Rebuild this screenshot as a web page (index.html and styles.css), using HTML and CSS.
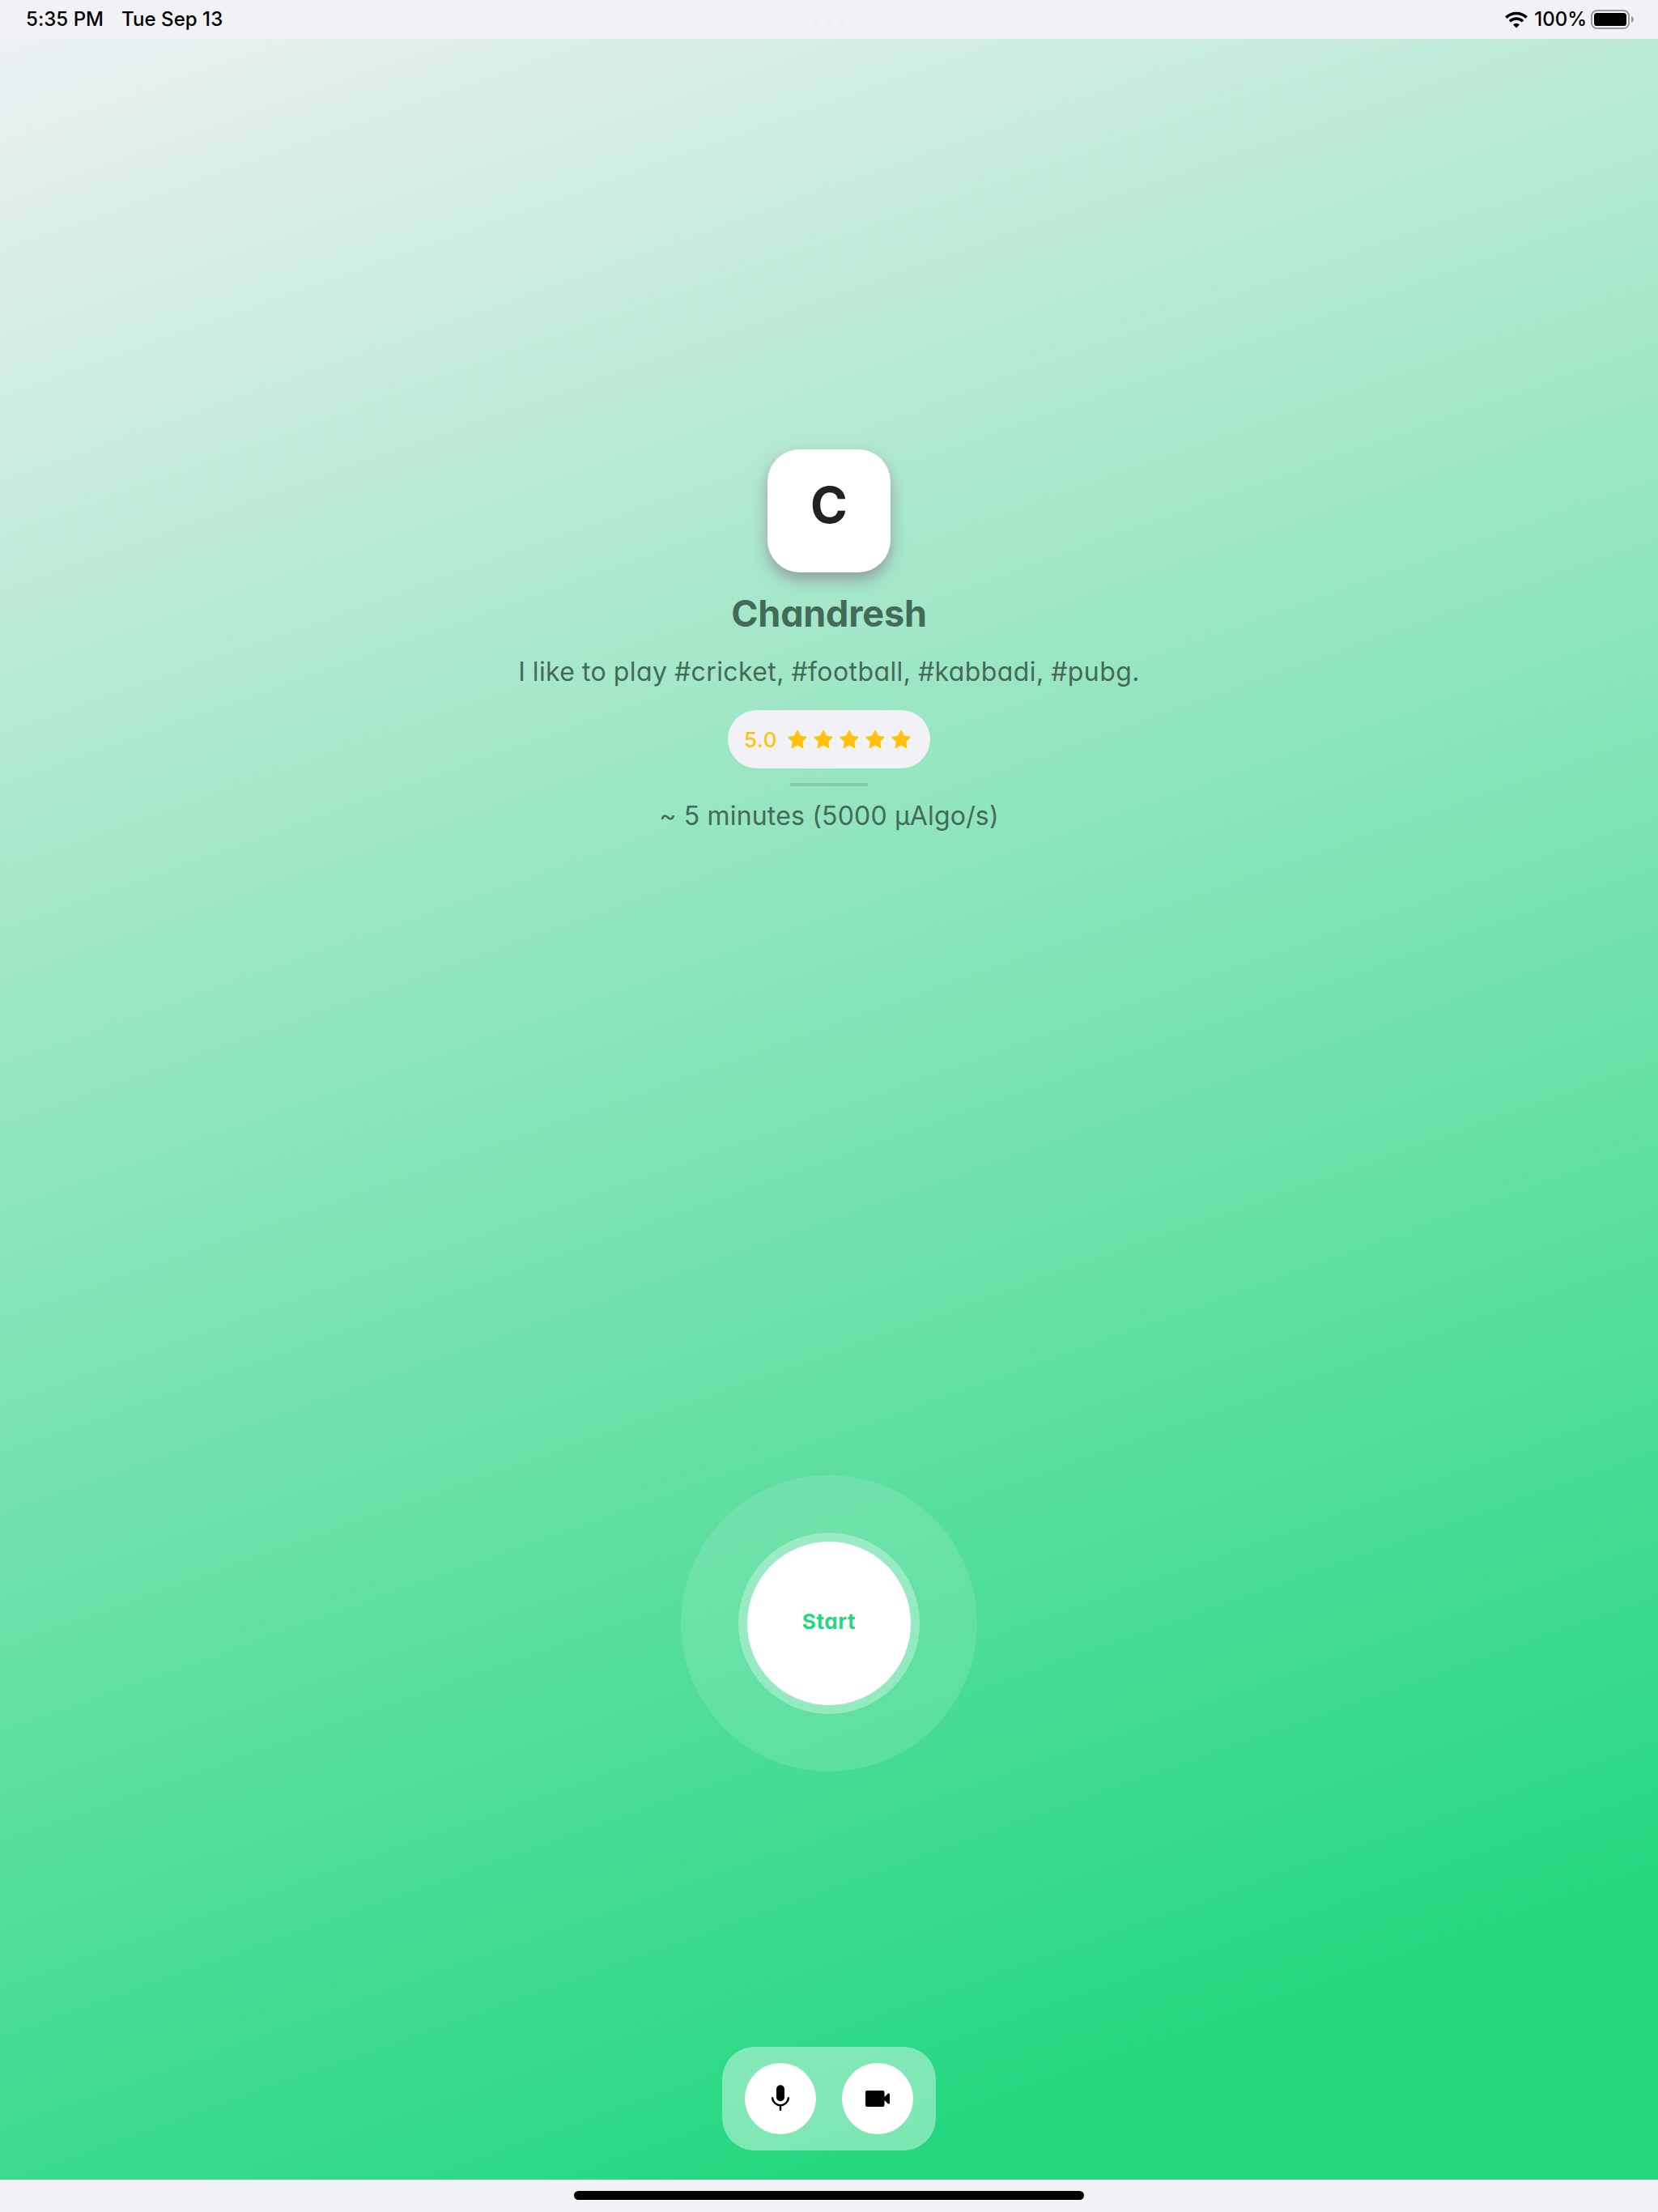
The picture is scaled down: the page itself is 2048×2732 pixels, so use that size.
FILE: index.html
```html
<!DOCTYPE html>
<html lang="en">
<head>
<meta charset="utf-8">
<title>Call Chandresh</title>
<link rel="stylesheet" href="styles.css">
</head>
<body>
<header class="status">
  <div class="status-left"><span class="time">5:35 PM</span><span class="date">Tue Sep 13</span></div>
  <div class="dots"><i></i><i></i><i></i></div>
  <div class="status-right">
    <svg class="wifi" width="28" height="21" viewBox="0 0 28 21">
      <path d="M1.4 7.6a18 18 0 0 1 25.2 0" fill="none" stroke="#000" stroke-width="3.6"/>
      <path d="M5.9 12.3a11.6 11.6 0 0 1 16.2 0" fill="none" stroke="#000" stroke-width="3.5"/>
      <path d="M10 16.4a5.8 5.8 0 0 1 8 0L14 20.4z"/>
    </svg>
    <span class="percent">100%</span>
    <svg class="battery" width="54" height="24" viewBox="0 0 54 24">
      <rect x="1" y="1" width="46" height="22" rx="6.5" fill="none" stroke="#99989d" stroke-width="2"/>
      <rect x="4" y="4" width="40" height="16" rx="3.6"/>
      <path d="M50 8c4 1.5 4 6.500 0 8z" fill="#99989d"/>
    </svg>
  </div>
</header>
<main class="screen">
  <div class="avatar">C</div>
  <h1 class="name">Chandresh</h1>
  <p class="bio">I like to play #cricket, #football, #kabbadi, #pubg.</p>
  <div class="rating">
    <svg width="0" height="0" class="defs"><symbol id="star" viewBox="0 0 1024 1024"><path d="M908.1 353.1l-253.9-36.9L540.7 86.1c-3.1-6.3-8.2-11.4-14.5-14.500-15.800-7.800-35-1.300-42.900 14.500L369.800 316.200l-253.900 36.900c-7 1-13.400 4.300-18.300 9.300a32.050 32.050 0 0 0 .6 45.300l183.700 179.100-43.400 252.900a31.950 31.950 0 0 0 46.400 33.700L512 754l227.100 119.400c6.200 3.300 13.400 4.400 20.500 3.200 17.400-3 29.100-19.500 26.100-36.900l-43.400-252.900 183.700-179.100c5-4.900 8.300-11.300 9.300-18.300 2.700-17.500-9.500-33.700-27-36.300z"/></symbol></svg>
    <span class="score">5.0</span>
    <div class="stars">
      <svg><use href="#star"/></svg><svg><use href="#star"/></svg><svg><use href="#star"/></svg><svg><use href="#star"/></svg><svg><use href="#star"/></svg>
    </div>
  </div>
  <div class="rule"></div>
  <p class="price">~ 5 minutes (5000 µAlgo/s)</p>
  <div class="halo"><div class="ring"><button class="start">Start</button></div></div>
  <div class="dock">
    <button class="round" aria-label="Microphone">
      <svg width="40" height="40" viewBox="0 0 40 40">
        <rect x="15" y="3.300" width="10" height="20" rx="5"/>
        <path d="M10.100 19.300a9.950 9.950 0 0 0 19.800 0M20 28.500v5.200" fill="none" stroke="#000" stroke-width="2.500" stroke-linecap="round"/>
      </svg>
    </button>
    <button class="round" aria-label="Camera">
      <svg width="40" height="40" viewBox="0 0 40 40">
        <rect x="5" y="10" width="23.500" height="20" rx="2"/>
        <path d="M28 18.500l4.600-4.600c1-.9 2.400-.5 2.400.8v10.600c0 1.300-1.400 1.700-2.400.8L28 21.500z"/>
      </svg>
    </button>
  </div>
</main>
<footer class="home"><div class="home-bar"></div></footer>
</body>
</html>
```
FILE: styles.css
```css
* { box-sizing: border-box; margin: 0; padding: 0; }
body {
  width: 2048px;
  height: 2732px;
  display: flex;
  flex-direction: column;
  background: #f2f1f6;
  font-family: Inter, "Liberation Sans", sans-serif;
  font-feature-settings: "cv11";
  color: #000;
}
svg { display: block; }
button { border: 0; font: inherit; font-feature-settings: inherit; }

.status {
  height: 48px;
  display: grid;
  grid-template-columns: 1fr auto 1fr;
  align-items: center;
  padding: 0 29px 0 32px;
  font-size: 24px;
  font-weight: 500;
  font-feature-settings: normal;
  line-height: 48px;
}
.status-left { display: flex; gap: 22px; letter-spacing: .05px; }
.dots { display: flex; gap: 6px; padding: 2px 3px 0 0; }
.dots i { width: 10px; height: 10px; border-radius: 50%; background: #efeef3; }
.status-right { display: flex; justify-content: flex-end; align-items: center; }
.wifi { margin-right: 8px; }
.percent { margin-right: 5px; }

.screen {
  height: 2644px;
  display: flex;
  flex-direction: column;
  align-items: center;
  padding-top: 507px;
  background: linear-gradient(160.5deg, #f2f1f6 -90px, #25d880 2810px);
  color: #446a59;
}
.avatar {
  width: 152px;
  height: 152px;
  border-radius: 40px;
  background: #fff;
  color: #222;
  font-size: 62px;
  font-weight: 700;
  line-height: 138px;
  text-align: center;
  box-shadow: 0 9px 18px rgba(120, 90, 120, .5);
}
.name { margin-top: 23px; font-size: 45px; font-weight: 700; line-height: 56px; letter-spacing: -.2px; }
.bio { margin-top: 24px; font-size: 32px; line-height: 40px; letter-spacing: .4px; word-spacing: -.8px; white-space: nowrap; }
.rating {
  width: 250px;
  height: 72px;
  margin-top: 27px;
  padding: 0 22px 0 20px;
  border-radius: 36px;
  background: #f2f1f6;
  display: flex;
  align-items: center;
  justify-content: space-between;
  color: #ffc20a;
}
.defs { position: absolute; }
.score { font-size: 26px; font-weight: 500; letter-spacing: .6px; }
.stars { display: flex; gap: 4px; padding-top: 2px; }
.stars svg { width: 28px; height: 28px; fill: currentColor; }
.rule { width: 96px; height: 4px; margin-top: 18px; background: #87cba9; }
.price { margin-top: 17px; font-size: 32px; line-height: 40px; letter-spacing: .17px; white-space: nowrap; }

.halo {
  width: 366px;
  height: 366px;
  margin-top: 794px;
  border-radius: 50%;
  background: rgba(255, 255, 255, .12);
  display: grid;
  place-items: center;
}
.ring {
  width: 224px;
  height: 224px;
  border-radius: 50%;
  background: rgba(255, 255, 255, .32);
  display: grid;
  place-items: center;
}
.start {
  width: 202px;
  height: 202px;
  padding-bottom: 5px;
  border-radius: 50%;
  background: #fff;
  color: #25d880;
  font-size: 26px;
  font-weight: 700;
  letter-spacing: .6px;
}
.dock {
  width: 264px;
  height: 128px;
  margin-top: 340px;
  border-radius: 40px;
  background: rgba(255, 255, 255, .4);
  display: flex;
  align-items: center;
  justify-content: center;
  gap: 32px;
}
.round {
  width: 88px;
  height: 88px;
  border-radius: 50%;
  background: #fff;
  display: grid;
  place-items: center;
}
.home { height: 40px; padding-top: 14px; }
.home-bar { width: 630px; height: 11px; margin: 0 auto; border-radius: 6px; background: #000; }
```
